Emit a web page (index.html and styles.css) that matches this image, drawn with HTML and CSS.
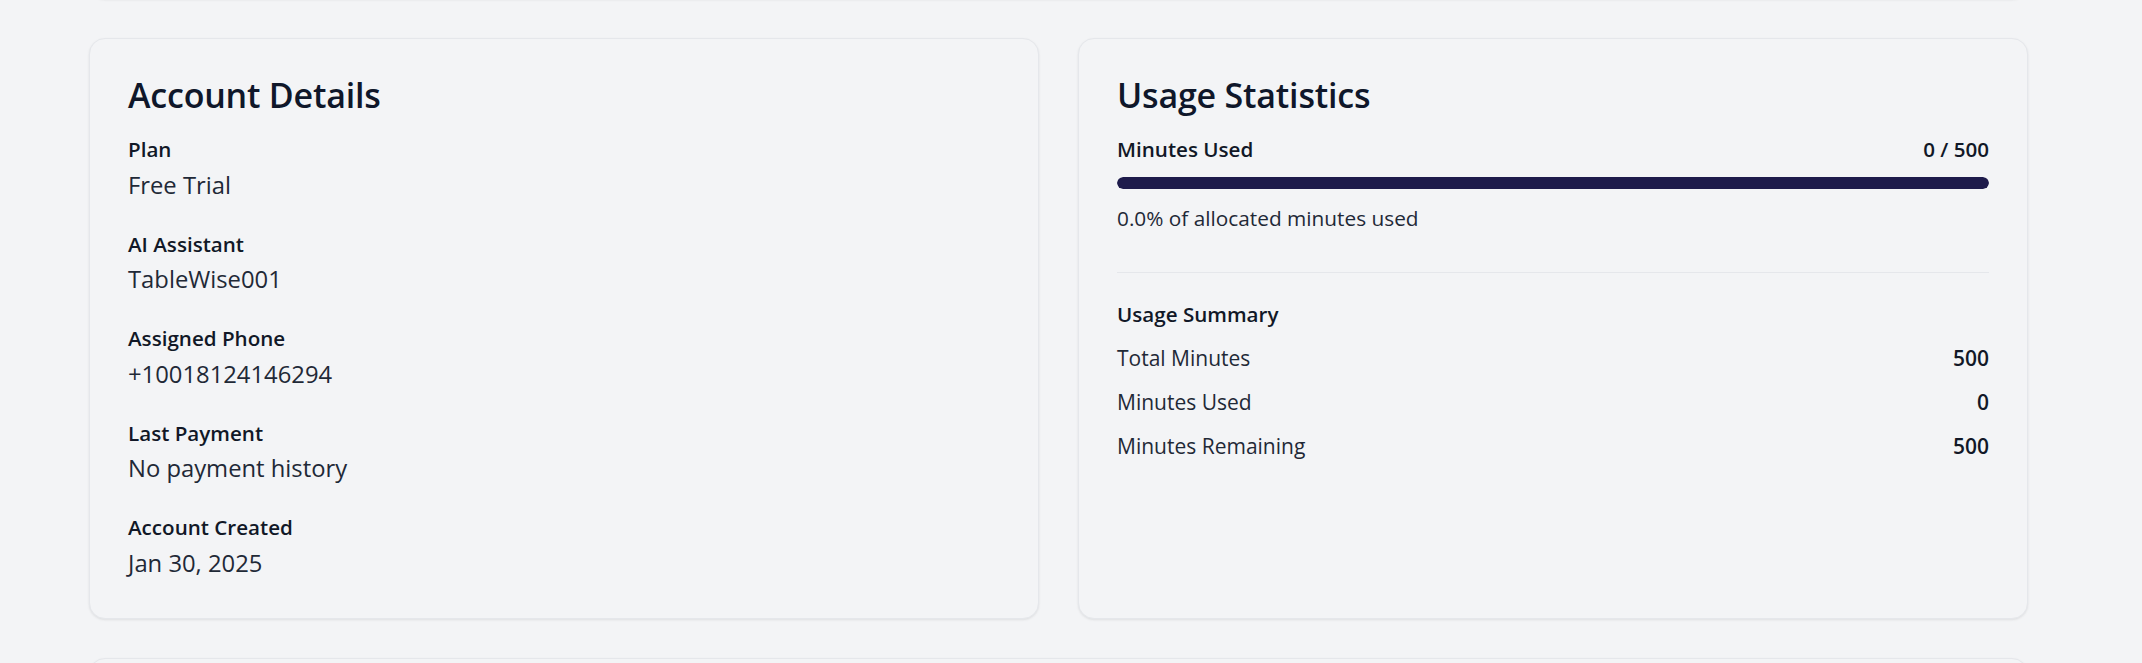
FILE: index.html
```html
<!DOCTYPE html>
<html lang="en">
<head>
<meta charset="utf-8">
<title>Account</title>
<link rel="stylesheet" href="styles.css">
</head>
<body>
<main class="page">
  <div class="card card-prev"></div>
  <div class="grid">
    <section class="card">
      <h2 class="card-title">Account Details</h2>
      <dl class="details">
        <div class="item"><dt class="label">Plan</dt><dd class="value">Free Trial</dd></div>
        <div class="item"><dt class="label">AI Assistant</dt><dd class="value">TableWise001</dd></div>
        <div class="item"><dt class="label">Assigned Phone</dt><dd class="value">+10018124146294</dd></div>
        <div class="item"><dt class="label">Last Payment</dt><dd class="value">No payment history</dd></div>
        <div class="item"><dt class="label">Account Created</dt><dd class="value">Jan 30, 2025</dd></div>
      </dl>
    </section>
    <section class="card">
      <h2 class="card-title">Usage Statistics</h2>
      <div class="usage-head">
        <span class="label">Minutes Used</span>
        <span class="label">0 / 500</span>
      </div>
      <div class="bar"><div class="bar-fill" style="width:100%"></div></div>
      <p class="usage-note">0.0% of allocated minutes used</p>
      <div class="summary">
        <h3 class="label">Usage Summary</h3>
        <div class="row"><span>Total Minutes</span><span class="num">500</span></div>
        <div class="row"><span>Minutes Used</span><span class="num">0</span></div>
        <div class="row"><span>Minutes Remaining</span><span class="num">500</span></div>
      </div>
    </section>
  </div>
  <div class="card card-next"></div>
</main>
</body>
</html>
```
FILE: styles.css
```css
* { box-sizing: border-box; }
html, body { margin: 0; padding: 0; }
body {
  background: #f3f4f6;
  font-family: "Open Sans", "Noto Sans", sans-serif;
  color: #111827;
  overflow: hidden;
}
.page {
  padding: 0 114px 0 89px;
  display: flex;
  flex-direction: column;
  gap: 39px;
}
.card {
  background: #f3f4f6;
  border: 1px solid #e5e7eb;
  border-radius: 16px;
  box-shadow: 0 1px 3px rgba(0,0,0,0.06), 0 1px 2px rgba(0,0,0,0.03);
  padding: 38px 38px 39.5px;
}
.card-prev { height: 100px; margin-top: -101px; }
.card-next { height: 100px; }
.grid {
  display: grid;
  grid-template-columns: 1fr 1fr;
  gap: 39px;
}
.card-title {
  margin: 0 0 22px;
  font-size: 34px;
  line-height: 36px;
  font-weight: 600;
  color: #0f172a;
  letter-spacing: -0.2px;
}
.details { margin: 0; display: flex; flex-direction: column; gap: 29px; }
.item { display: flex; flex-direction: column; }
.label {
  margin: 0;
  font-size: 20.6px;
  line-height: 28px;
  font-weight: 600;
  color: #111827;
}
.value {
  margin: 5.5px 0 0;
  font-size: 23.8px;
  line-height: 32px;
  color: #1f2937;
}
.usage-head { display: flex; justify-content: space-between; }
.bar {
  margin-top: 14px;
  height: 12px;
  border-radius: 999px;
  background: #e5e7eb;
  overflow: hidden;
}
.bar-fill { height: 100%; background: #1e1b4b; border-radius: 999px; }
.usage-note {
  margin: 14px 0 0;
  font-size: 20.8px;
  line-height: 30px;
  color: #1f2937;
}
.summary {
  margin-top: 39px;
  border-top: 1px solid #e5e7eb;
  padding-top: 27px;
}
.summary .label { margin-bottom: 14.5px; }
.row {
  display: flex;
  justify-content: space-between;
  font-size: 21px;
  line-height: 30px;
  color: #1f2937;
  margin-bottom: 14px;
}
.num { font-weight: 600; color: #111827; }
```
